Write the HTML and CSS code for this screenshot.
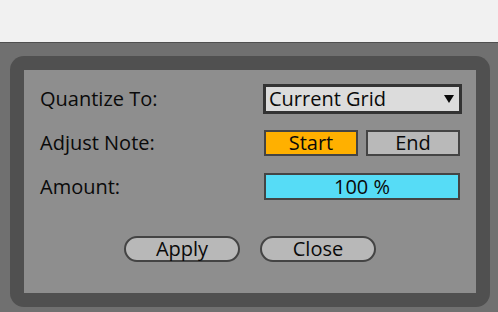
FILE: index.html
```html
<!DOCTYPE html>
<html lang="en">
<head>
    <meta charset="UTF-8">
    <meta name="viewport" content="width=device-width, initial-scale=1.0">
    <title>Quantize</title>
    <link rel="stylesheet" href="styles.css">
</head>
<body>
    <div class="topbar"></div>
    <div class="frame">
        <div class="panel">
            <div class="row row-quantize">
                <span class="label">Quantize To:</span>
                <div class="dropdown">
                    <span>Current Grid</span>
                    <span class="arrow"></span>
                </div>
            </div>
            <div class="row row-adjust">
                <span class="label">Adjust Note:</span>
                <div class="toggles">
                    <button class="toggle on">Start</button>
                    <button class="toggle">End</button>
                </div>
            </div>
            <div class="row row-amount">
                <span class="label">Amount:</span>
                <div class="amount">100 %</div>
            </div>
            <div class="actions">
                <button class="pill">Apply</button>
                <button class="pill">Close</button>
            </div>
        </div>
    </div>
</body>
</html>
```

FILE: styles.css
```css
body {
    margin: 0;
    background-color: #707070;
    font-family: 'Open Sans', sans-serif;
    font-size: 20px;
    color: #0a0a0a;
    height: 312px;
    overflow: hidden;
}
.topbar {
    height: 42px;
    background-color: #f1f1f1;
    border-bottom: 1px solid #4f4f4f;
}
.frame {
    margin: 13px 0 0 10px;
    width: 480px;
    height: 251px;
    box-sizing: border-box;
    padding: 14px;
    background-color: #505050;
    border-radius: 14px;
}
.panel {
    height: 100%;
    background-color: #8e8e8e;
    padding: 14px 14px 0 16px;
    box-sizing: border-box;
    display: flex;
    flex-direction: column;
}
.row {
    display: flex;
    align-items: center;
    justify-content: space-between;
}
.label {
    line-height: 1;
}
.row-adjust {
    margin-top: 16px;
}
.row-amount {
    margin-top: 17px;
    padding-right: 2px;
}
.dropdown {
    width: 199px;
    height: 30px;
    box-sizing: border-box;
    border: 3px solid #333;
    background-color: #dcdcdc;
    display: flex;
    align-items: center;
    justify-content: space-between;
    padding: 0 5px 0 3px;
    line-height: 1;
}
.arrow {
    width: 0;
    height: 0;
    border-left: 5px solid transparent;
    border-right: 5px solid transparent;
    border-top: 8px solid #0a0a0a;
}
.toggles {
    display: flex;
    gap: 8px;
    padding-right: 2px;
}
.toggle, .pill {
    font-family: 'Open Sans', sans-serif;
    font-size: 20px;
    color: #0a0a0a;
    line-height: 1;
    padding: 0;
    margin: 0;
}
.toggle {
    width: 94px;
    height: 26px;
    border: 2px solid #444;
    background-color: #b9b9b9;
}
.toggle.on {
    background-color: #ffb000;
}
.amount {
    width: 196px;
    height: 27px;
    box-sizing: border-box;
    border: 2px solid #444;
    background-color: #56dcf6;
    display: flex;
    align-items: center;
    justify-content: center;
    line-height: 1;
}
.actions {
    margin-top: 36px;
    padding-right: 2px;
    display: flex;
    justify-content: center;
    gap: 20px;
}
.pill {
    width: 116px;
    height: 26px;
    border: 2px solid #444;
    border-radius: 13px;
    background-color: #b8b8b8;
}
```
